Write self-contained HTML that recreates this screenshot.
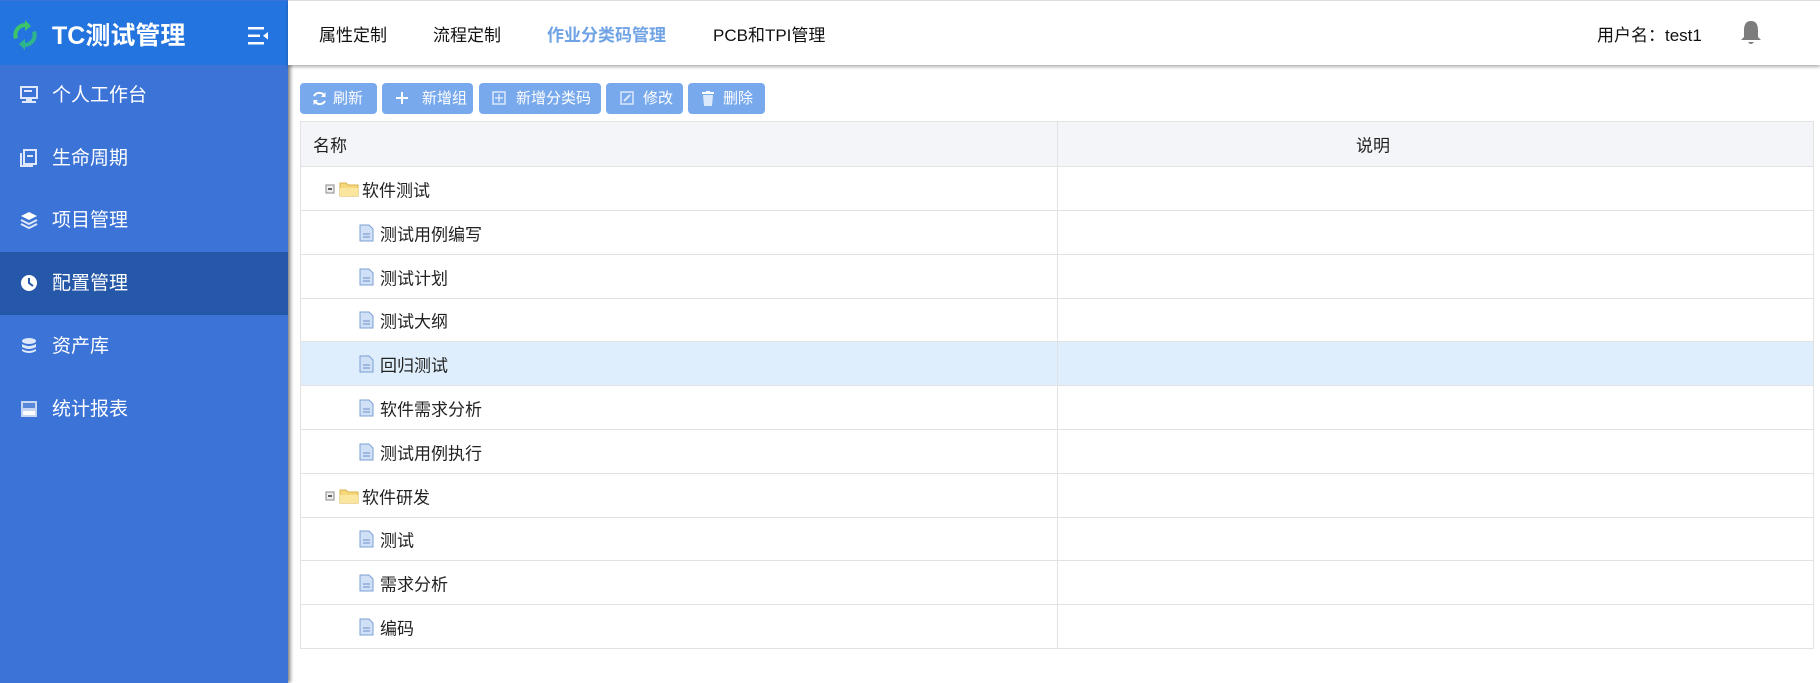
<!DOCTYPE html>
<html><head><meta charset="utf-8">
<style>
*{margin:0;padding:0;box-sizing:border-box}
body{width:1820px;height:683px;overflow:hidden;background:#fff;font-family:"Liberation Sans","Noto Sans CJK SC",sans-serif;position:relative}
.abs{position:absolute}
#side{left:0;top:0;width:288px;height:683px;background:#3c73d7;box-shadow:2px 0 4px rgba(0,0,0,.55)}
#logo{left:0;top:1px;width:288px;height:64px;background:#2474df}
.mi{position:absolute;left:0;width:288px;height:63px;color:#fff;font-size:19px;line-height:63px;padding-left:52px}
.mi svg{position:absolute;left:20px;top:22px}
.mi.act{background:#2558a8}
#top{left:288px;top:0;width:1532px;height:65px;border-top:1px solid #ddd;box-shadow:0 2px 3px rgba(0,0,0,.3);background:#fff}
.tab{position:absolute;top:20px;font-size:17px;color:#111}
.btn{position:absolute;top:83px;height:31px;background:#78a9ec;border-radius:4px;color:#fff;font-size:15px;line-height:31px}
.btn svg{position:absolute;top:8px}
.row{position:absolute;left:300px;width:1514px;border-bottom:1px solid #e2e2e2;border-left:1px solid #e2e2e2;border-right:1px solid #e2e2e2;font-size:17px;color:#222}
.row .t{position:absolute;top:50%;transform:translateY(-50%)}
.vl{position:absolute;left:756px;top:0;bottom:0;width:1px;background:#e2e2e2}
</style></head><body>
<div id="side" class="abs">
 <div id="logo" class="abs">
  <svg class="abs" style="left:9px;top:18px" width="32" height="32" viewBox="0 0 32 32"><path d="M5 20 A12 12 0 0 1 16 4 L16 1 L22 7 L16 12 L16 8 A8 8 0 0 0 9 19Z" fill="#3cc46a"/><path d="M27 12 A12 12 0 0 1 16 28 L16 31 L10 25 L16 20 L16 24 A8 8 0 0 0 23 13Z" fill="#2fb58b"/></svg>
  <div class="abs" style="left:52px;top:15px;color:#fff;font-size:25px;font-weight:bold">TC测试管理</div>
  <svg class="abs" style="left:248px;top:26px" width="21" height="18" viewBox="0 0 21 18"><rect x="0" y="0" width="16" height="2.5" fill="#fff"/><rect x="0" y="7.5" width="12" height="2.5" fill="#fff"/><rect x="0" y="15" width="16" height="2.5" fill="#fff"/><path d="M20 5 L15 8.7 L20 12.5Z" fill="#fff"/></svg>
 </div>
 <div class="mi" style="top:64px"><svg width="18" height="18" viewBox="0 0 18 18"><rect x="1" y="1" width="16" height="11" fill="none" stroke="#dfe8fa" stroke-width="2"/><rect x="4" y="4" width="8" height="2" fill="#dfe8fa"/><rect x="6" y="13" width="6" height="2" fill="#dfe8fa"/><rect x="2" y="15" width="14" height="2" fill="#dfe8fa"/></svg>个人工作台</div>
 <div class="mi" style="top:127px"><svg width="18" height="18" viewBox="0 0 18 18"><rect x="4" y="1" width="12" height="14" fill="none" stroke="#dfe8fa" stroke-width="2"/><path d="M1 4 V17 H13" fill="none" stroke="#dfe8fa" stroke-width="2"/><rect x="7" y="6" width="6" height="2" fill="#dfe8fa"/></svg>生命周期</div>
 <div class="mi" style="top:189px"><svg width="18" height="18" viewBox="0 0 18 18"><path d="M9 1 L17 5 L9 9 L1 5Z" fill="#fff"/><path d="M1 9 L9 13 L17 9 M1 13 L9 17 L17 13" fill="none" stroke="#dfe8fa" stroke-width="2"/></svg>项目管理</div>
 <div class="mi act" style="top:252px"><svg width="18" height="18" viewBox="0 0 18 18"><circle cx="9" cy="9" r="8" fill="#fff"/><path d="M9 4 V9 L13 12" fill="none" stroke="#2558a8" stroke-width="2"/></svg>配置管理</div>
 <div class="mi" style="top:315px"><svg width="18" height="18" viewBox="0 0 18 18"><ellipse cx="9" cy="4" rx="7" ry="3" fill="#dfe8fa"/><path d="M2 7 Q9 11 16 7 V10 Q9 14 2 10Z M2 12 Q9 16 16 12 V14 Q9 18 2 14Z" fill="#dfe8fa"/></svg>资产库</div>
 <div class="mi" style="top:378px"><svg width="18" height="18" viewBox="0 0 18 18"><rect x="1" y="1" width="16" height="16" fill="#c6d6f3"/><rect x="3" y="3" width="12" height="5" fill="#5a88d9"/><rect x="3" y="11" width="12" height="4" fill="#fff"/></svg>统计报表</div>
</div>
<div id="top" class="abs">
 <div class="tab" style="left:31px">属性定制</div>
 <div class="tab" style="left:145px">流程定制</div>
 <div class="tab" style="left:259px;color:#6fa3e6;font-weight:bold">作业分类码管理</div>
 <div class="tab" style="left:425px">PCB和TPI管理</div>
 <div class="tab" style="left:1309px">用户名：test1</div>
 <svg class="abs" style="left:1452px;top:19px" width="22" height="26" viewBox="0 0 22 26"><path d="M11 1 C5 1 4 6 4 11 V17 L1 20 H21 L18 17 V11 C18 6 17 1 11 1Z" fill="#7d7d7d"/><path d="M8 22 Q11 26 14 22Z" fill="#7d7d7d"/></svg>
</div>
<div class="btn" style="left:300px;width:77px;padding-left:33px"><svg style="left:12px" width="15" height="15" viewBox="0 0 15 15"><path d="M12.5 5 A6 6 0 0 0 2 5 M2.5 10 A6 6 0 0 0 13 10" fill="none" stroke="#fff" stroke-width="2"/><path d="M13.5 1 V6 H9Z M1.5 14 V9 H6Z" fill="#fff"/></svg>刷新</div>
<div class="btn" style="left:382px;width:91px;padding-left:40px"><svg style="left:13px" width="14" height="14" viewBox="0 0 14 14"><path d="M7 1 V13 M1 7 H13" stroke="#fff" stroke-width="2"/></svg>新增组</div>
<div class="btn" style="left:479px;width:122px;padding-left:37px"><svg style="left:13px" width="14" height="14" viewBox="0 0 14 14"><rect x="1" y="1" width="12" height="12" fill="none" stroke="#dbe8fb" stroke-width="1.5"/><path d="M7 3 V11 M3 7 H11" stroke="#dbe8fb" stroke-width="1.5"/></svg>新增分类码</div>
<div class="btn" style="left:606px;width:77px;padding-left:37px"><svg style="left:14px" width="14" height="14" viewBox="0 0 14 14"><rect x="1" y="1" width="12" height="12" fill="none" stroke="#dbe8fb" stroke-width="1.5"/><path d="M4 10 L10 4" stroke="#dbe8fb" stroke-width="2"/></svg>修改</div>
<div class="btn" style="left:688px;width:77px;padding-left:35px"><svg style="left:14px" width="12" height="15" viewBox="0 0 12 15"><rect x="0" y="1" width="12" height="2" fill="#fff"/><rect x="4" y="0" width="4" height="2" fill="#fff"/><path d="M1 4 H11 L10 15 H2Z" fill="#dbe8fb"/></svg>删除</div>

<div class="row" style="top:121px;height:46px;background:#f4f5f8;border-top:1px solid #e2e2e2"><div class="vl"></div><span class="t" style="left:12px">名称</span><span class="t" style="left:1055px">说明</span></div>

<div class="row" style="top:167px;height:44px"><div class="vl"></div>
 <svg class="t" style="left:24px" width="36" height="18" viewBox="0 0 36 18"><rect x="1" y="5" width="8" height="8" fill="#eee" stroke="#8a8a8a"/><path d="M3 9 H7" stroke="#333" stroke-width="1.5"/><path d="M15 3 H21 L23 5 H33 V16 H15Z" fill="#f6d77a" stroke="#d9b24a"/><path d="M15 8 H33 V16 H15Z" fill="#fbe6a0"/></svg><span class="t" style="left:61px">软件测试</span></div>
<div class="row" style="top:211px;height:44px"><div class="vl"></div><svg class="t" style="left:58px" width="15" height="18" viewBox="0 0 15 18"><path d="M1 1 H10 L14 5 V17 H1Z" fill="#cfe0f7" stroke="#7b9fd3"/><path d="M4 10 H11 M4 13 H11" stroke="#6d8fc8"/></svg><span class="t" style="left:79px">测试用例编写</span></div>
<div class="row" style="top:255px;height:44px"><div class="vl"></div><svg class="t" style="left:58px" width="15" height="18" viewBox="0 0 15 18"><path d="M1 1 H10 L14 5 V17 H1Z" fill="#cfe0f7" stroke="#7b9fd3"/><path d="M4 10 H11 M4 13 H11" stroke="#6d8fc8"/></svg><span class="t" style="left:79px">测试计划</span></div>
<div class="row" style="top:299px;height:43px"><div class="vl"></div><svg class="t" style="left:58px" width="15" height="18" viewBox="0 0 15 18"><path d="M1 1 H10 L14 5 V17 H1Z" fill="#cfe0f7" stroke="#7b9fd3"/><path d="M4 10 H11 M4 13 H11" stroke="#6d8fc8"/></svg><span class="t" style="left:79px">测试大纲</span></div>
<div class="row" style="top:342px;height:44px;background:#dfeefc"><div class="vl"></div><svg class="t" style="left:58px" width="15" height="18" viewBox="0 0 15 18"><path d="M1 1 H10 L14 5 V17 H1Z" fill="#cfe0f7" stroke="#7b9fd3"/><path d="M4 10 H11 M4 13 H11" stroke="#6d8fc8"/></svg><span class="t" style="left:79px">回归测试</span></div>
<div class="row" style="top:386px;height:44px"><div class="vl"></div><svg class="t" style="left:58px" width="15" height="18" viewBox="0 0 15 18"><path d="M1 1 H10 L14 5 V17 H1Z" fill="#cfe0f7" stroke="#7b9fd3"/><path d="M4 10 H11 M4 13 H11" stroke="#6d8fc8"/></svg><span class="t" style="left:79px">软件需求分析</span></div>
<div class="row" style="top:430px;height:44px"><div class="vl"></div><svg class="t" style="left:58px" width="15" height="18" viewBox="0 0 15 18"><path d="M1 1 H10 L14 5 V17 H1Z" fill="#cfe0f7" stroke="#7b9fd3"/><path d="M4 10 H11 M4 13 H11" stroke="#6d8fc8"/></svg><span class="t" style="left:79px">测试用例执行</span></div>
<div class="row" style="top:474px;height:44px"><div class="vl"></div>
 <svg class="t" style="left:24px" width="36" height="18" viewBox="0 0 36 18"><rect x="1" y="5" width="8" height="8" fill="#eee" stroke="#8a8a8a"/><path d="M3 9 H7" stroke="#333" stroke-width="1.5"/><path d="M15 3 H21 L23 5 H33 V16 H15Z" fill="#f6d77a" stroke="#d9b24a"/><path d="M15 8 H33 V16 H15Z" fill="#fbe6a0"/></svg><span class="t" style="left:61px">软件研发</span></div>
<div class="row" style="top:518px;height:43px"><div class="vl"></div><svg class="t" style="left:58px" width="15" height="18" viewBox="0 0 15 18"><path d="M1 1 H10 L14 5 V17 H1Z" fill="#cfe0f7" stroke="#7b9fd3"/><path d="M4 10 H11 M4 13 H11" stroke="#6d8fc8"/></svg><span class="t" style="left:79px">测试</span></div>
<div class="row" style="top:561px;height:44px"><div class="vl"></div><svg class="t" style="left:58px" width="15" height="18" viewBox="0 0 15 18"><path d="M1 1 H10 L14 5 V17 H1Z" fill="#cfe0f7" stroke="#7b9fd3"/><path d="M4 10 H11 M4 13 H11" stroke="#6d8fc8"/></svg><span class="t" style="left:79px">需求分析</span></div>
<div class="row" style="top:605px;height:44px"><div class="vl"></div><svg class="t" style="left:58px" width="15" height="18" viewBox="0 0 15 18"><path d="M1 1 H10 L14 5 V17 H1Z" fill="#cfe0f7" stroke="#7b9fd3"/><path d="M4 10 H11 M4 13 H11" stroke="#6d8fc8"/></svg><span class="t" style="left:79px">编码</span></div>
</body></html>
